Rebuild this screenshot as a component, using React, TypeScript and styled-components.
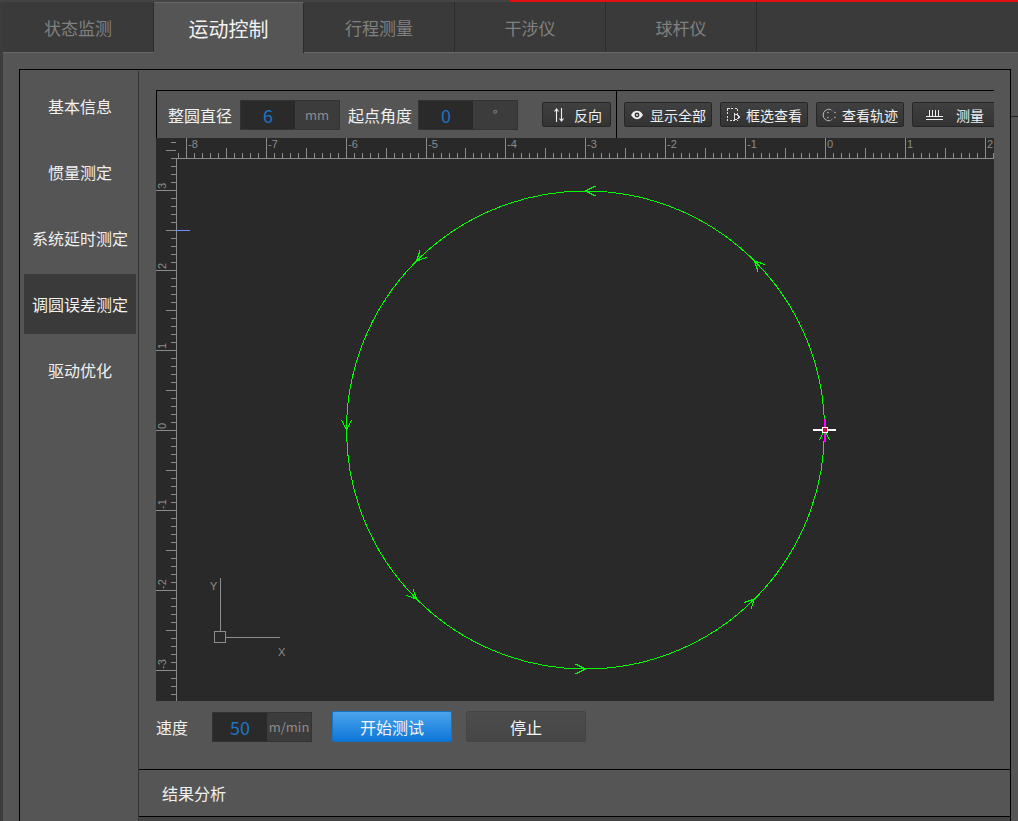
import { createGlobalStyle } from 'styled-components';
import styled from 'styled-components';

const FONT = '"Noto Sans CJK SC", "Noto Sans", sans-serif';
const STEP = 7.99;
const ZERO_X = 669;
const ZERO_Y = 292;
const CANVAS_W = 838;
const CANVAS_H = 563;
const CENTER = { x: 429.5, y: 292 };
const RADIUS = 239;

const TABS = ['状态监测', '运动控制', '行程测量', '干涉仪', '球杆仪'];
const NAV = ['基本信息', '惯量测定', '系统延时测定', '调圆误差测定', '驱动优化'];

const GlobalStyle = createGlobalStyle`
  html, body {
    margin: 0;
    padding: 0;
    background: #555;
  }
  * {
    box-sizing: border-box;
  }
`;

const Page = styled.div`
  width: 1018px;
  height: 821px;
  overflow: hidden;
  display: flex;
  flex-direction: column;
  background: #555;
  font-family: ${FONT};
  color: #eee;
`;
const TopEdge = styled.div`
  height: 2px;
  flex: none;
  background: linear-gradient(to right, #444 510px, #e01010 510px);
`;
const Body = styled.div`
  flex: 1;
  display: flex;
  flex-direction: column;
  min-height: 0;
  border-left: 3px solid #3c3c3c;
`;
const TabBar = styled.div`
  height: 51px;
  flex: none;
  display: flex;
  background: #3a3a3a;
  border-bottom: 1px solid #6a6a6a;
`;
const Tab = styled.div<{ $active?: boolean }>`
  width: ${p => (p.$active ? 150 : 151)}px;
  height: ${p => (p.$active ? 51 : 50)}px;
  display: flex;
  align-items: center;
  justify-content: center;
  font-size: ${p => (p.$active ? 20 : 17)}px;
  color: ${p => (p.$active ? '#f2f2f2' : '#808080')};
  background: ${p => (p.$active ? '#555' : 'transparent')};
  border-right: 1px solid #2c2c2c;
  border-top: ${p => (p.$active ? '1px solid #666' : 'none')};
`;
const Workspace = styled.div`
  flex: 1;
  display: flex;
  min-height: 0;
  padding-top: 16px;
  padding-left: 16px;
`;
const Panel = styled.div`
  width: 992px;
  display: flex;
  border-top: 1px solid #000;
  border-left: 1px solid #000;
  border-right: 1px solid #000;
`;
const Gutter = styled.div`
  flex: 1;
  height: 48px;
  border-bottom: 1px solid #222;
`;
const Nav = styled.div`
  width: 119px;
  flex: none;
  display: flex;
  flex-direction: column;
  gap: 6px;
  padding: 5px 2px 0 4px;
  margin-top: 1px;
  border-right: 1px solid #333;
`;
const NavItem = styled.div<{ $active?: boolean }>`
  height: 60px;
  display: flex;
  align-items: center;
  justify-content: center;
  font-size: 16px;
  color: #f0f0f0;
  background: ${p => (p.$active ? '#3a3a3a' : 'transparent')};
`;
const Main = styled.div`
  flex: 1;
  min-width: 0;
  display: flex;
  flex-direction: column;
`;
const TestSection = styled.div`
  height: 700px;
  flex: none;
  padding: 20px 16px 0 17px;
  border-bottom: 1px solid #000;
`;
const Toolbar = styled.div`
  height: 48px;
  display: flex;
  border-top: 1px solid #000;
  border-left: 1px solid #000;
  overflow: hidden;
`;
const FieldGroup = styled.div`
  width: 459px;
  flex: none;
  display: flex;
  align-items: center;
  padding-left: 11px;
`;
const Label = styled.span`
  font-size: 16px;
  color: #f0f0f0;
  white-space: nowrap;
`;
const NumberBox = styled.div<{ $left?: number }>`
  width: 100px;
  height: 30px;
  flex: none;
  display: flex;
  margin: 0 8px;
  margin-left: ${p => p.$left ?? 8}px;
  border: 1px solid #333;
  background: #3c3c3c;
`;
const NumberValue = styled.div`
  width: 54px;
  display: flex;
  align-items: center;
  justify-content: center;
  background: #2a2a2a;
  color: #1c74c4;
  font-size: 18px;
`;
const Unit = styled.div`
  flex: 1;
  display: flex;
  align-items: center;
  justify-content: center;
  color: #8c8c8c;
  font-size: 13px;
`;
const ToolButton = styled.div<{ $width: number; $pad: number; $gap: number }>`
  width: ${p => p.$width}px;
  height: 25px;
  flex: none;
  display: flex;
  align-items: center;
  gap: ${p => p.$gap}px;
  padding-left: ${p => p.$pad}px;
  font-size: 14px;
  color: #f0f0f0;
  white-space: nowrap;
  border: 1px solid #262626;
  border-radius: 2px;
  background: linear-gradient(#404040, #333);
`;
const ReverseSlot = styled.div`
  margin-left: 16px;
`;
const ViewGroup = styled.div`
  flex: 1;
  min-width: 0;
  display: flex;
  align-items: center;
  gap: 8px;
  padding-left: 7px;
  border-left: 1px solid #000;
`;
const Canvas = styled.div`
  width: ${CANVAS_W}px;
  height: ${CANVAS_H}px;
  background: #292929;
`;
const CanvasSvg = styled.svg`
  display: block;
  text {
    font-family: "Liberation Sans", sans-serif;
    font-size: 11px;
    fill: #8c8c8c;
  }
`;
const Controls = styled.div`
  height: 31px;
  margin-top: 10px;
  display: flex;
  align-items: center;
`;
const ActionButton = styled.div<{ $primary?: boolean }>`
  width: 120px;
  height: 31px;
  display: flex;
  align-items: center;
  justify-content: center;
  font-size: 16px;
  color: #f4f4f4;
  border-radius: 2px;
  margin-left: ${p => (p.$primary ? 12 : 14)}px;
  border: 1px solid ${p => (p.$primary ? '#1673c8' : '#444')};
  background: ${p => (p.$primary ? 'linear-gradient(#4ba4ec, #0d76d8)' : 'linear-gradient(#4c4c4c, #464646)')};
`;
const ResultRow = styled.div`
  height: 47px;
  flex: none;
  display: flex;
  align-items: center;
  padding-left: 23px;
  font-size: 16px;
  color: #f0f0f0;
  border-bottom: 1px solid #000;
`;
const BottomFill = styled.div`
  flex: 1;
  background: #444;
`;

function EyeIcon() {
  return (
    <svg width="12" height="10" viewBox="0 0 12 10">
      <path d="M0 5C2 1.6 4 .8 6 .8S10 1.6 12 5C10 8.4 8 9.2 6 9.2S2 8.4 0 5Z" fill="#eee" />
      <circle cx="6" cy="5" r="2.4" fill="#333" />
      <circle cx="6" cy="5" r="1" fill="#eee" />
    </svg>
  );
}
function SelectIcon() {
  return (
    <svg width="14" height="14" viewBox="0 0 14 14" fill="none" stroke="#ddd" shapeRendering="crispEdges">
      <rect x="0.5" y="0.5" width="10" height="12" strokeDasharray="2 1.5" />
      <path d="M7.5 5.5V12.5L13 9Z" fill="#333" />
    </svg>
  );
}
function TrackIcon() {
  return (
    <svg width="15" height="14" viewBox="0 0 15 14" fill="none" stroke="#bbb">
      <path d="M9 1.3A5.8 5.8 0 1 0 9 12.7" />
      <path d="M9 1.3A5.8 5.8 0 0 1 11.5 3.2M11.5 10.8A5.8 5.8 0 0 1 9 12.7" strokeDasharray="1.5 1" />
      <circle cx="7" cy="4.5" r=".7" fill="#ccc" stroke="none" />
      <circle cx="7" cy="9.5" r=".7" fill="#ccc" stroke="none" />
      <circle cx="14" cy="4.5" r=".7" fill="#ccc" stroke="none" />
      <circle cx="14" cy="9.5" r=".7" fill="#ccc" stroke="none" />
    </svg>
  );
}
function RulerIcon() {
  return (
    <svg width="17" height="11" viewBox="0 0 17 11" fill="none" stroke="#eee" shapeRendering="crispEdges">
      <path d="M0 7.5H17M3.5 1V7M6.5 1V7M9.5 1V7M12.5 1V7M0 10.5H17" />
    </svg>
  );
}
function ReverseIcon() {
  return (
    <svg width="10" height="14" viewBox="0 0 10 14" fill="none" stroke="#eee" strokeWidth="1.1">
      <path d="M2.5 14V1M.5 3.5 2.5 1 4.5 3.5M7.5 0V13M5.5 10.5 7.5 13 9.5 10.5" />
    </svg>
  );
}

function ticks(origin: number, limit: number) {
  const out: { k: number; pos: number }[] = [];
  for (let k = -90; k <= 90; k++) {
    const pos = Math.round(origin + k * STEP);
    if (pos >= 0 && pos < limit) out.push({ k, pos });
  }
  return out;
}

function TopRuler() {
  return (
    <g stroke="#8c8c8c" shapeRendering="crispEdges">
      {ticks(ZERO_X, CANVAS_W)
        .filter(t => t.pos > 20)
        .map(t => {
          const top = t.k % 10 === 0 ? 0 : t.k % 5 === 0 ? 10 : 15;
          return <line key={t.k} x1={t.pos + 0.5} x2={t.pos + 0.5} y1={top} y2={20} />;
        })}
      <line x1={20} x2={CANVAS_W} y1={20.5} y2={20.5} />
      {ticks(ZERO_X, CANVAS_W)
        .filter(t => t.k % 10 === 0 && t.pos > 20)
        .map(t => (
          <text key={t.k} x={t.pos + 2} y={10} stroke="none">
            {t.k / 10}
          </text>
        ))}
    </g>
  );
}

function LeftRuler() {
  return (
    <g stroke="#8c8c8c" shapeRendering="crispEdges">
      {ticks(ZERO_Y, CANVAS_H).map(t => {
        const left = t.k % 10 === 0 ? 0 : t.k % 5 === 0 ? 10 : 15;
        return <line key={t.k} x1={left} x2={20} y1={t.pos + 0.5} y2={t.pos + 0.5} />;
      })}
      <line x1={20.5} x2={20.5} y1={20} y2={CANVAS_H} />
      {ticks(ZERO_Y, CANVAS_H)
        .filter(t => t.k % 10 === 0)
        .map(t => (
          <text key={t.k} x={10} y={t.pos - 1} stroke="none" transform={`rotate(-90 10 ${t.pos - 1})`}>
            {-t.k / 10}
          </text>
        ))}
    </g>
  );
}

function Arrows() {
  const heads = [];
  for (let i = 0; i < 8; i++) {
    const a = (i * Math.PI) / 4;
    const tip = { x: CENTER.x + RADIUS * Math.cos(a), y: CENTER.y - RADIUS * Math.sin(a) };
    // counter-clockwise on screen, barbs trail behind the tip
    const dir = a + Math.PI / 2;
    const dx = Math.cos(dir);
    const dy = -Math.sin(dir);
    const barb = (turn: number) => {
      const c = Math.cos(turn);
      const s = Math.sin(turn);
      return `${tip.x - 11 * (dx * c - dy * s)} ${tip.y - 11 * (dx * s + dy * c)}`;
    };
    heads.push(
      <path
        key={i}
        d={`M${barb(0.46)}L${tip.x} ${tip.y}L${barb(-0.46)}`}
        fill="none"
        stroke="#00ff00"
      />
    );
  }
  return <g shapeRendering="crispEdges">{heads}</g>;
}

function Crosshair() {
  const cx = 668;
  const cy = 292;
  return (
    <g shapeRendering="crispEdges">
      <rect x={cx} y={cy - 11} width={2} height={23} fill="#ff00ff" />
      <rect x={cx - 11} y={cy - 1} width={9} height={2} fill="#fff" />
      <rect x={cx + 3} y={cy - 1} width={9} height={2} fill="#fff" />
      <rect x={cx - 2} y={cy - 3} width={6} height={6} fill="#fff" />
      <rect x={cx - 1} y={cy - 2} width={4} height={4} fill="#c8103c" />
    </g>
  );
}

function AxisMark() {
  return (
    <g>
      <g fill="none" stroke="#8c8c8c" shapeRendering="crispEdges">
        <rect x={58.5} y={493.5} width={11} height={11} />
        <line x1={64.5} x2={64.5} y1={440} y2={493} />
        <line x1={70} x2={124} y1={499.5} y2={499.5} />
      </g>
      <text x={54} y={452}>Y</text>
      <text x={122} y={518}>X</text>
    </g>
  );
}

export default function App() {
  return (
    <Page>
      <GlobalStyle />
      <TopEdge />
      <Body>
        <TabBar>
          {TABS.map((t, i) => (
            <Tab key={t} $active={i === 1}>
              {t}
            </Tab>
          ))}
        </TabBar>
        <Workspace>
          <Panel>
            <Nav>
              {NAV.map((n, i) => (
                <NavItem key={n} $active={i === 3}>
                  {n}
                </NavItem>
              ))}
            </Nav>
            <Main>
              <TestSection>
                <Toolbar>
                  <FieldGroup>
                    <Label>整圆直径</Label>
                    <NumberBox>
                      <NumberValue>6</NumberValue>
                      <Unit>mm</Unit>
                    </NumberBox>
                    <Label>起点角度</Label>
                    <NumberBox $left={6}>
                      <NumberValue>0</NumberValue>
                      <Unit>°</Unit>
                    </NumberBox>
                    <ReverseSlot>
                      <ToolButton $width={69} $pad={11} $gap={10}>
                        <ReverseIcon />
                        反向
                      </ToolButton>
                    </ReverseSlot>
                  </FieldGroup>
                  <ViewGroup>
                    <ToolButton $width={88} $pad={6} $gap={7}>
                      <EyeIcon />
                      显示全部
                    </ToolButton>
                    <ToolButton $width={88} $pad={6} $gap={5}>
                      <SelectIcon />
                      框选查看
                    </ToolButton>
                    <ToolButton $width={88} $pad={4} $gap={6}>
                      <TrackIcon />
                      查看轨迹
                    </ToolButton>
                    <ToolButton $width={88} $pad={13} $gap={13}>
                      <RulerIcon />
                      测量
                    </ToolButton>
                  </ViewGroup>
                </Toolbar>
                <Canvas>
                  <CanvasSvg width={CANVAS_W} height={CANVAS_H} viewBox={`0 0 ${CANVAS_W} ${CANVAS_H}`}>
                    <circle
                      cx={CENTER.x}
                      cy={CENTER.y}
                      r={RADIUS}
                      fill="none"
                      stroke="#00ff00"
                      shapeRendering="crispEdges"
                    />
                    <Arrows />
                    <TopRuler />
                    <LeftRuler />
                    <line x1={20} x2={34} y1={92.5} y2={92.5} stroke="#6a8cff" shapeRendering="crispEdges" />
                    <AxisMark />
                    <Crosshair />
                  </CanvasSvg>
                </Canvas>
                <Controls>
                  <Label>速度</Label>
                  <NumberBox $left={24}>
                    <NumberValue>50</NumberValue>
                    <Unit>m/min</Unit>
                  </NumberBox>
                  <ActionButton $primary>开始测试</ActionButton>
                  <ActionButton>停止</ActionButton>
                </Controls>
              </TestSection>
              <ResultRow>结果分析</ResultRow>
              <BottomFill />
            </Main>
          </Panel>
          <Gutter />
        </Workspace>
      </Body>
    </Page>
  );
}
